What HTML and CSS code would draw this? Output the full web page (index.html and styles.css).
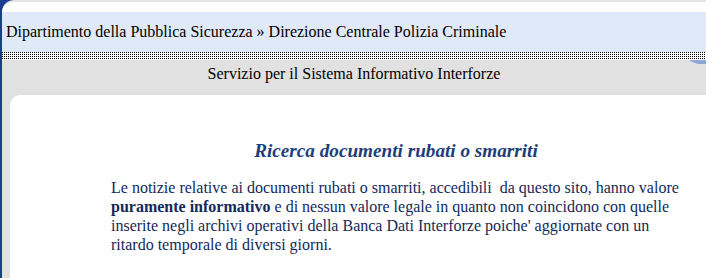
FILE: index.html
```html
<!DOCTYPE html>
<html>
<head>
	<meta charset="UTF-8">
	<title>Ricerca documenti rubati o smarriti</title>
	<link rel="stylesheet" href="styles.css">
</head>
<body>
	<div class="pagina">
		<div class="cima"></div>
		<div class="intestazione">Dipartimento della Pubblica Sicurezza &raquo; Direzione Centrale Polizia Criminale</div>
		<div class="puntini"></div>
		<div class="servizio">Servizio per il Sistema Informativo Interforze</div>
		<div class="corpo">
			<div class="contenuto">
				<h1 class="titolo">Ricerca documenti rubati o smarriti</h1>
				<p class="testo">Le notizie relative ai documenti rubati o smarriti, accedibili&nbsp; da questo sito, hanno valore <b>puramente informativo</b> e di nessun valore legale in quanto non coincidono con quelle inserite negli archivi operativi della Banca Dati Interforze poiche' aggiornate con un ritardo temporale di diversi giorni.</p>
			</div>
		</div>
	</div>
</body>
</html>
```

FILE: styles.css
```css
html, body {
	margin: 0;
	padding: 0;
	background-color: #fff;
}

body, div, h1, p, b {
	font-family: "Liberation Serif", "Times New Roman", serif;
}

body {
	font-size: 16px;
	color: #000;
}

.pagina {
	border-left: 2px dotted #1a3e8f;
	background-color: #1a3e8f;
	min-height: 278px;
	display: flex;
	flex-direction: column;
}

.cima {
	height: 10px;
	border-top: 2px solid #e4e4e4;
	background: #fff;
	border-top-left-radius: 14px;
}

.intestazione {
	height: 40px;
	line-height: 40px;
	padding-left: 4px;
	background-color: #e0e9f8;
}

.puntini {
	height: 8px;
	background-color: #000;
	background-image:
		linear-gradient(to right, transparent 1px, #fff 1px),
		linear-gradient(to bottom, transparent 1px, #fff 1px);
	background-size: 2px 2px, 2px 2px;
}

.servizio {
	height: 35px;
	line-height: 28px;
	text-align: center;
	background-color: #e1e1e1;
	background-image: linear-gradient(200deg, #8fa8d8 0, #8fa8d8 6px, transparent 7px);
	background-repeat: no-repeat;
	background-position: right top;
	background-size: 16px 4px;
}

.corpo {
	flex: 1;
	background-color: #e1e1e1;
	padding-left: 8px;
	display: flex;
}

.contenuto {
	flex: 1;
	background-color: #fff;
	border-top-left-radius: 10px;
	padding: 44px 0 20px 101px;
}

.titolo {
	margin: 0 0 15px 0;
	font-size: 19.2px;
	line-height: 24px;
	font-style: italic;
	font-weight: bold;
	color: #1e3d7a;
	text-align: center;
	width: 570px;
}

.testo {
	margin: 0;
	width: 572px;
	line-height: 19px;
	color: #13295a;
}
```
